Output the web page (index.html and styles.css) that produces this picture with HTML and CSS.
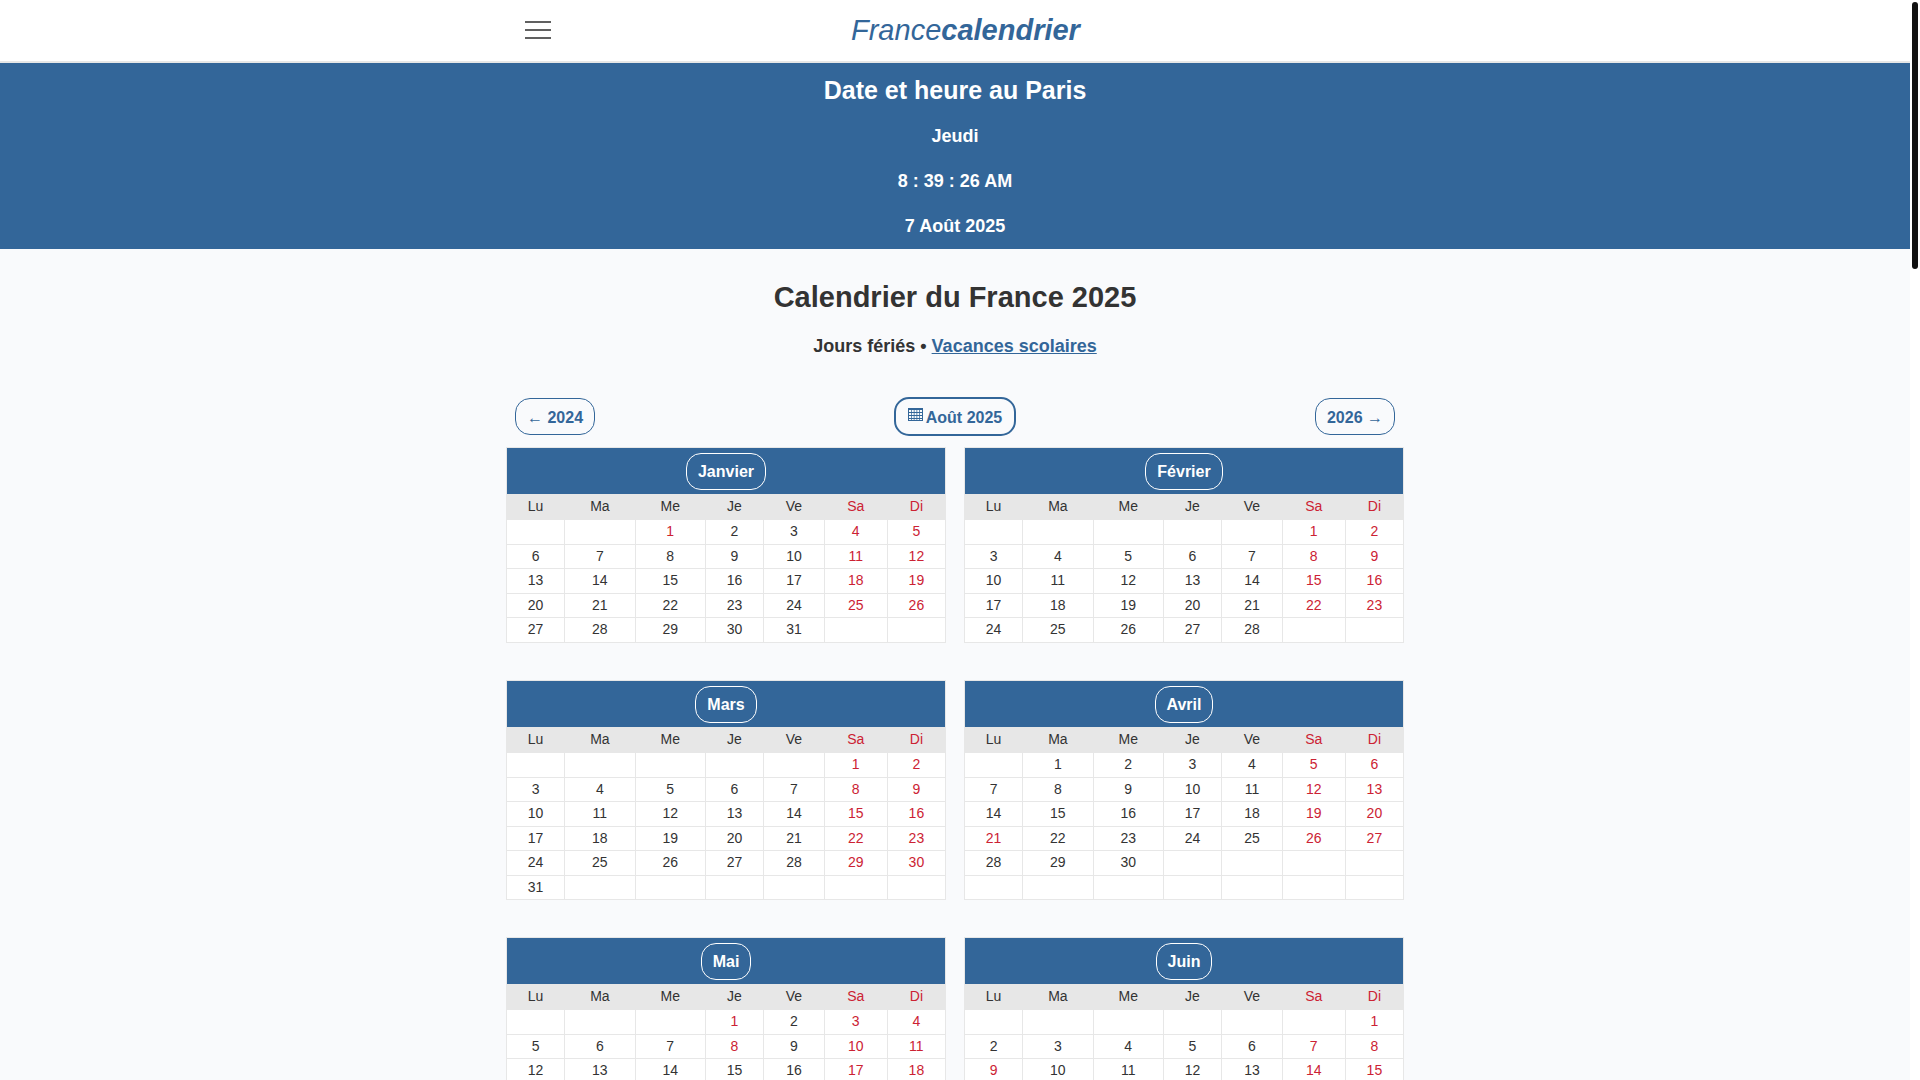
FILE: index.html
```html
<!DOCTYPE html>
<html lang="fr">
<head>
    <meta charset="utf-8">
    <meta name="viewport" content="width=device-width, initial-scale=1">
    <title>Calendrier du France 2025</title>
    <link rel="stylesheet" href="styles.css">
</head>
<body>
    <header class="header">
        <div class="container header-row">
            <button class="menu-button" type="button" aria-label="Menu">
                <span class="bar"></span>
                <span class="bar"></span>
                <span class="bar"></span>
            </button>
            <a class="logo" href="#">France<b>calendrier</b></a>
        </div>
    </header>

    <section class="clock">
        <h2>Date et heure au Paris</h2>
        <p>Jeudi</p>
        <p>8 : 39 : 26 AM</p>
        <p>7 Août 2025</p>
    </section>

    <main class="container">
        <h1>Calendrier du France 2025</h1>
        <p class="subtitle">Jours fériés • <a href="#">Vacances scolaires</a></p>

        <nav class="year-nav">
            <a class="pill" href="#">← 2024</a>
            <a class="pill pill-current" href="#">
                <svg class="icon" width="15" height="13" viewBox="0 0 15 13" aria-hidden="true">
                    <rect width="15" height="13" fill="#336699"/>
                    <path d="M1 3h13M1 6h13M1 9h13" fill="none" stroke="#f9fafc" stroke-width="2" stroke-dasharray="2 0.75"/>
                    <path d="M1 11.5h13" fill="none" stroke="#f9fafc" stroke-dasharray="2 0.75"/>
                </svg>
                <span>Août 2025</span>
            </a>
            <a class="pill" href="#">2026 →</a>
        </nav>

        <div id="months" class="months"></div>
    </main>

    <div class="scrollbar"><div class="scrollbar-thumb"></div></div>

<script>
    const year = 2025;
    const days = ['Lu', 'Ma', 'Me', 'Je', 'Ve', 'Sa', 'Di'];

    // number of week rows, the same for both months of a pair
    const months = [
        { name: 'Janvier', weeks: 5, holidays: [1] },
        { name: 'Février', weeks: 5, holidays: [] },
        { name: 'Mars', weeks: 6, holidays: [] },
        { name: 'Avril', weeks: 6, holidays: [21] },
        { name: 'Mai', weeks: 6, holidays: [1, 8, 29] },
        { name: 'Juin', weeks: 6, holidays: [9] },
        { name: 'Juillet', weeks: 5, holidays: [14] },
        { name: 'Août', weeks: 5, holidays: [15] },
        { name: 'Septembre', weeks: 5, holidays: [] },
        { name: 'Octobre', weeks: 5, holidays: [] },
        { name: 'Novembre', weeks: 5, holidays: [1, 11] },
        { name: 'Décembre', weeks: 5, holidays: [25] }
    ];

    function monthTable(month, index) {
        const offset = (new Date(year, index, 1).getDay() + 6) % 7;
        const last = new Date(year, index + 1, 0).getDate();

        let html = '<table class="month"><thead>';
        html += '<tr class="month-name"><th colspan="7"><a class="pill pill-white" href="#">' + month.name + '</a></th></tr>';
        html += '<tr class="day-names">';
        days.forEach((day, i) => {
            html += '<th' + (i > 4 ? ' class="red"' : '') + '>' + day + '</th>';
        });
        html += '</tr></thead><tbody>';

        for (let w = 0; w < month.weeks; w++) {
            html += '<tr>';
            for (let d = 0; d < 7; d++) {
                const n = w * 7 + d - offset + 1;
                const red = d > 4 || month.holidays.includes(n);
                html += '<td' + (red ? ' class="red"' : '') + '>' + (n > 0 && n <= last ? n : '') + '</td>';
            }
            html += '</tr>';
        }
        return html + '</tbody></table>';
    }

    document.getElementById('months').innerHTML = months.map(monthTable).join('');
</script>
</body>
</html>
```
FILE: styles.css
```css
* {
    box-sizing: border-box;
}
body {
    margin: 0;
    padding-right: 10px;
    font-family: "Liberation Sans", Arial, sans-serif;
    font-size: 16px;
    color: #333;
    background: #f9fafc;
}
a {
    color: #336699;
}
.container {
    max-width: 898px;
    margin: 0 auto;
}

/* header */
.header {
    background: #fff;
    border-bottom: 2px solid #e7e7e7;
}
.header-row {
    display: flex;
    align-items: center;
    gap: 300px;
    height: 61px;
    padding: 0 19px;
}
.menu-button {
    display: flex;
    flex-direction: column;
    gap: 6px;
    width: 26px;
    padding: 0 0 2px;
    border: 0;
    background: none;
    cursor: pointer;
}
.bar {
    height: 2px;
    background: #606060;
}
.logo {
    font-size: 29px;
    font-style: italic;
    text-decoration: none;
}

/* clock */
.clock {
    padding: 10px 0 0;
    background: #336699;
    color: #fff;
    text-align: center;
    font-weight: bold;
}
.clock h2 {
    margin: 0 0 7px;
    font-size: 25px;
    line-height: 34px;
}
.clock p {
    margin: 0;
    font-size: 18px;
    line-height: 45px;
}

/* titles */
h1 {
    margin: 30px 0 13px;
    font-size: 29px;
    line-height: 36px;
    text-align: center;
}
.subtitle {
    margin: 0 0 33px;
    font-size: 18px;
    font-weight: bold;
    line-height: 36px;
    text-align: center;
}

/* year links */
.year-nav {
    display: flex;
    align-items: center;
    justify-content: space-between;
    margin-bottom: 11px;
    padding: 0 9px;
}
.pill {
    display: inline-block;
    padding: 9px 11px 7px;
    border: 1px solid #336699;
    border-radius: 15px;
    font-weight: bold;
    line-height: 19px;
    text-decoration: none;
}
.pill-current {
    display: flex;
    gap: 3px;
    padding: 9px 12px 7px;
    border-width: 2px;
}
.pill-white {
    padding: 8px 11px;
    border-color: #fff;
    color: #fff;
}

/* months */
.months {
    display: grid;
    grid-template-columns: 1fr 1fr;
    gap: 37px 18px;
    padding-bottom: 37px;
}
.month {
    width: 100%;
    border-collapse: collapse;
    background: #fff;
    font-size: 14px;
    text-align: center;
}
.month th,
.month td {
    padding: 0 1px 2px;
    border: 1px solid #e7e7e7;
}
.month .month-name th {
    padding: 5px 0 4px;
    border-bottom: 0;
    background: #336699;
    font-size: 16px;
}
.month .day-names th {
    height: 25px;
    border-color: #e7e7e7;
    background: #e7e7e7;
    font-weight: normal;
}
.month td {
    height: 25px;
}
.month tr:nth-child(even) td {
    height: 24px;
}
.month .red {
    color: #cc2233;
}

/* scrollbar, stays over the page */
.scrollbar {
    position: fixed;
    top: 0;
    right: 0;
    bottom: 0;
    width: 10px;
    padding: 2px;
    background: #fff;
}
.scrollbar-thumb {
    height: 267px;
    border-radius: 3px;
    background: #111;
}
```
